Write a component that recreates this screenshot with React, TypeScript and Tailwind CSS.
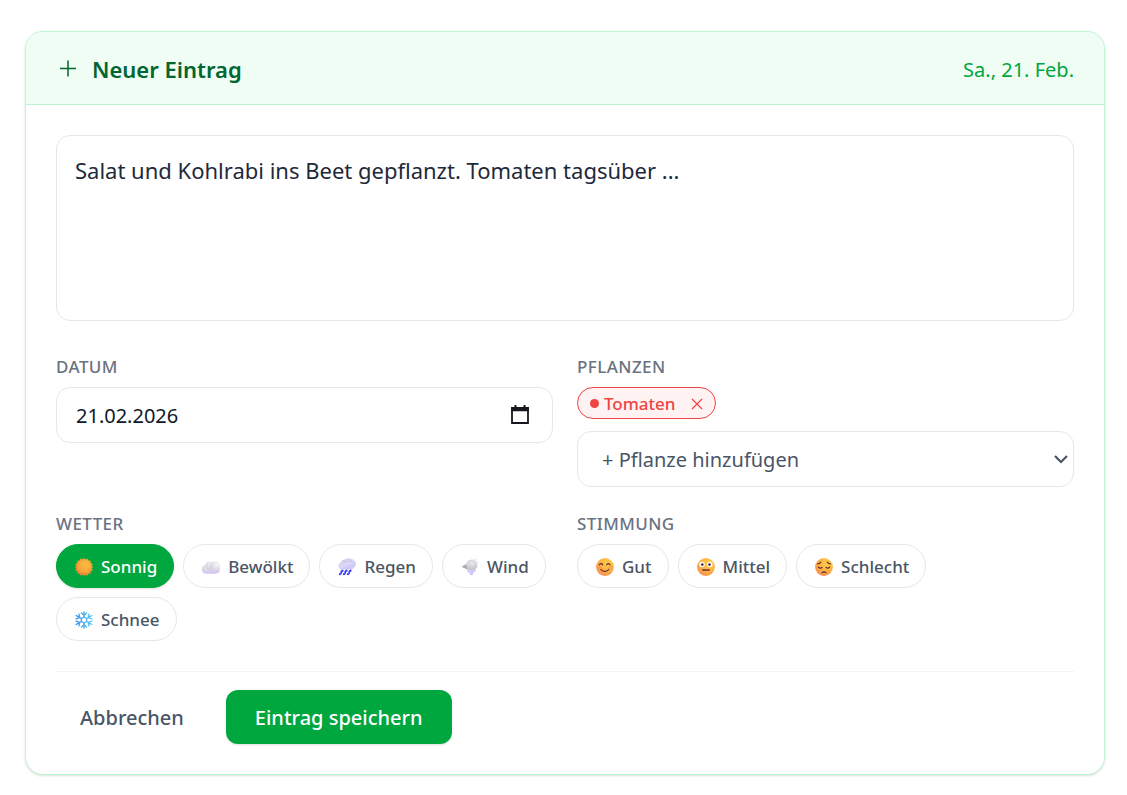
import React, { useState } from 'react';

interface Option {
  label: string;
  icon: React.ReactNode;
}

interface OptionGroupProps {
  title: string;
  options: Option[];
  selected: string;
  onSelect: (label: string) => void;
}

const SunIcon = () => (
  <svg viewBox="0 0 18 18" className="h-[18px] w-[18px]" aria-hidden="true">
    <defs>
      <radialGradient id="sun" cx="0.62" cy="0.32" r="0.75">
        <stop offset="0" stopColor="#fdb93f" />
        <stop offset="0.6" stopColor="#f39c36" />
        <stop offset="1" stopColor="#dd7c35" />
      </radialGradient>
    </defs>
    <path
      d="M9 0l1.500 1.500 1.900-.9 1 2 2.200.1.100 2.200 2 1-.9 1.900L18 9l-1.200 1.500.9 1.900-2 1-.1 2.200-2.200.1-1 2-1.900-.9L9 18l-1.500-1.200-1.900.9-1-2-2.200-.1-.1-2.200-2-1 .9-1.900L0 9l1.200-1.200-.9-1.900 2-1 .1-2.200 2.200-.1 1-2 1.900.9z"
      fill="url(#sun)"
    />
    <circle cx="9" cy="9" r="6" fill="#ffc24a" opacity=".3" />
  </svg>
);

const CloudIcon = () => (
  <svg viewBox="0 0 18 18" className="h-[18px] w-[18px]" aria-hidden="true">
    <defs>
      <linearGradient id="cloud" x1="0.6" y1="0" x2="0.4" y2="1">
        <stop offset="0" stopColor="#e9e6ec" />
        <stop offset="0.55" stopColor="#dcd5e6" />
        <stop offset="1" stopColor="#d3c3f2" />
      </linearGradient>
      <radialGradient id="cloudPuff" cx="0.65" cy="0.3" r="0.7">
        <stop offset="0" stopColor="#f7f6f8" />
        <stop offset="1" stopColor="#d3cddd" />
      </radialGradient>
    </defs>
    <rect x="0" y="8" width="18" height="7.500" rx="3.700" fill="url(#cloud)" />
    <circle cx="3.700" cy="10.500" r="3.500" fill="url(#cloudPuff)" />
    <circle cx="7.500" cy="8" r="4.200" fill="url(#cloudPuff)" />
    <circle cx="12.800" cy="8.500" r="5.100" fill="url(#cloudPuff)" />
    <path d="M1 12.500c3 2 12 2 15.500-.5-.5 2.200-2 3.500-4 3.500H4.200c-1.700 0-2.900-1.200-3.200-3z" fill="#d6c6f5" />
  </svg>
);

const RainIcon = () => (
  <svg viewBox="0 0 18 18" className="h-[18px] w-[18px]" aria-hidden="true">
    <defs>
      <linearGradient id="rain" x1="0.2" y1="0" x2="0.8" y2="1">
        <stop offset="0" stopColor="#cfcbe2" />
        <stop offset="0.5" stopColor="#dcd8f8" />
        <stop offset="1" stopColor="#c9bdf6" />
      </linearGradient>
    </defs>
    <path
      d="M4 11.500C1.800 11.500.300 10 .300 8s1.200-3.200 2.600-3.500C3.500 2.400 5.200 1.300 7 1.500 8.500-.1 11-.3 12.800.9c1.300-.1 2.500.4 3.200 1.400 1.300.7 2 1.900 1.900 3.400.1 1.600-.6 3-1.900 3.800-.8 1.300-2 2-3.500 2z"
      fill="url(#rain)"
    />
    <path d="M5 4c1.500-.8 3-.5 4 .7M11 3c1.800-.4 3.300.5 3.800 2" fill="none" stroke="#bfb9dc" strokeWidth=".8" />
    <path
      d="M4.600 12.600l-1.200 1M3 15.200l-1.200 1M8.600 12.600l-1.200 1M7 15.200l-1.200 1M12.600 12.600l-1.200 1M11 15.200l-1.200 1"
      stroke="#3f45f0"
      strokeWidth="2.100"
      strokeLinecap="round"
    />
  </svg>
);

const WindIcon = () => (
  <svg viewBox="0 0 18 18" className="h-[18px] w-[18px]" aria-hidden="true">
    <defs>
      <radialGradient id="wind" cx="0.65" cy="0.35" r="0.7">
        <stop offset="0" stopColor="#e9e8ea" />
        <stop offset="1" stopColor="#bdb9c4" />
      </radialGradient>
    </defs>
    <path
      d="M.5 8.800l4.800-3c.4-2.300 1.800-3.700 4-3.900 1.400-.9 3.100-.4 3.800.8 1.800.3 2.900 1.500 2.900 3.200 1 1.700.4 3.500-1 4.500-1 1.600-3 2.200-4.800 1.500-1.300.5-2.700.3-3.700-.4L5 10.600z"
      fill="url(#wind)"
    />
    <path d="M.5 8.800L5.200 6.500l1.200 5z" fill="#aeabb3" />
    <path d="M5.500 11.500c1.300.9 3 1.200 4.700.6 1.600.5 3.400.1 4.600-1.200l-.4 3.100-1.900.3-.6 2.700-2.900.2-.1-2.300c-1.900-.3-3.200-1.600-3.400-3.400z" fill="#cdc5fb" />
    <circle cx="14.300" cy="2" r=".9" fill="#d9d8dc" />
    <circle cx="16.300" cy="4.300" r=".8" fill="#dddce0" />
  </svg>
);

const SnowIcon = () => (
  <svg viewBox="0 0 18 18" className="h-[18px] w-[18px]" aria-hidden="true">
    <defs>
      <linearGradient id="snow" gradientUnits="userSpaceOnUse" x1="0" y1="9" x2="18" y2="9">
        <stop offset="0" stopColor="#3f8fe0" />
        <stop offset="1" stopColor="#5ad0fb" />
      </linearGradient>
    </defs>
    <g fill="none" stroke="url(#snow)" strokeWidth="1.400" strokeLinecap="round" strokeLinejoin="round">
      <path d="M9 .8V6M9 12v5.200M6.400 2L9 4.300 11.600 2M6.400 16L9 13.700l2.600 2.300" />
      <path d="M1.300 4.600l5.100 2.900M11.600 10.500l5.100 2.900M1.200 7.900l3.500-1.200L4 3.200M16.800 10.100l-3.500 1.200.7 3.500" />
      <path d="M1.300 13.400l5.100-2.900M11.600 7.500l5.100-2.900M1.200 10.100l3.500 1.200L4 14.800M16.800 7.900l-3.500-1.200.7-3.500" />
      <path d="M9 6l2.600 1.500v3L9 12l-2.600-1.500v-3z" />
    </g>
  </svg>
);

const Face = ({ id, children }: { id: string; children: React.ReactNode }) => (
  <svg viewBox="0 0 18 18" className="h-[18px] w-[18px]" aria-hidden="true">
    <defs>
      <radialGradient id={id} cx="0.65" cy="0.28" r="0.85">
        <stop offset="0" stopColor="#ffcd47" />
        <stop offset="0.55" stopColor="#fbb143" />
        <stop offset="0.85" stopColor="#f7924e" />
        <stop offset="1" stopColor="#f4706c" />
      </radialGradient>
    </defs>
    <circle cx="9" cy="9" r="8.900" fill={`url(#${id})`} />
    {children}
  </svg>
);

const HappyFace = () => (
  <Face id="happy">
    <circle cx="3.700" cy="9.500" r="2" fill="#f98a52" opacity=".5" />
    <circle cx="14.500" cy="9.500" r="2" fill="#f98a52" opacity=".5" />
    <g fill="none" stroke="#5b2a3c" strokeWidth="1.200" strokeLinecap="round">
      <path d="M3.400 6.800c.6-1.700 2.700-1.700 3.300 0M10.700 6.800c.6-1.700 2.700-1.700 3.300 0" />
      <path d="M5 11.500c1.500 2.500 6.200 2.500 7.700 0" />
    </g>
  </Face>
);

const NeutralFace = () => (
  <Face id="neutral">
    <circle cx="5" cy="6.500" r="2.700" fill="#fff" />
    <circle cx="12.800" cy="6.500" r="2.700" fill="#fff" />
    <circle cx="5.300" cy="6.600" r="1.300" fill="#4b2639" />
    <circle cx="12.500" cy="6.600" r="1.300" fill="#4b2639" />
    <path d="M5.700 12h6.600" stroke="#6d2c3b" strokeWidth="1.400" strokeLinecap="round" />
  </Face>
);

const SadFace = () => (
  <Face id="sad">
    <g fill="none" stroke="#5b2a3c" strokeWidth="1.200" strokeLinecap="round">
      <path d="M2.800 5.900c1.400-.1 2.500-.8 3-1.900M15.200 5.900c-1.400-.1-2.500-.8-3-1.900" />
      <path d="M3.300 9.200c.9 1.200 2.700 1.200 3.700.2M11 9.400c1 1 2.800 1 3.700-.2" />
      <path d="M7 14.700c1.200-.9 2.800-.9 4 0" />
    </g>
  </Face>
);

const weatherOptions: Option[] = [
  { label: 'Sonnig', icon: <SunIcon /> },
  { label: 'Bewölkt', icon: <CloudIcon /> },
  { label: 'Regen', icon: <RainIcon /> },
  { label: 'Wind', icon: <WindIcon /> },
  { label: 'Schnee', icon: <SnowIcon /> },
];

const moodOptions: Option[] = [
  { label: 'Gut', icon: <HappyFace /> },
  { label: 'Mittel', icon: <NeutralFace /> },
  { label: 'Schlecht', icon: <SadFace /> },
];

const labelClass = 'mb-2 block text-[17px] leading-6 font-medium tracking-wide text-[#6a7282] uppercase';

const OptionGroup: React.FC<OptionGroupProps> = ({ title, options, selected, onSelect }) => (
  <div role="group" aria-label={title}>
    <span className={labelClass}>{title}</span>
    <div className="flex flex-wrap gap-[9px]">
      {options.map((option) => (
        <button
          key={option.label}
          type="button"
          aria-pressed={selected === option.label}
          onClick={() => onSelect(option.label)}
          className={`flex h-11 items-center gap-2 rounded-full border pt-px pr-4 pl-[18px] text-[17px] font-medium ${
            selected === option.label
              ? 'border-[#00a63e] bg-[#00a63e] text-white shadow-sm'
              : 'border-gray-200 bg-white text-[#4a5565]'
          }`}
        >
          {option.icon}
          {option.label}
        </button>
      ))}
    </div>
  </div>
);

const App: React.FC = () => {
  const [text, setText] = useState('Salat und Kohlrabi ins Beet gepflanzt. Tomaten tagsüber ...');
  const [date, setDate] = useState('21.02.2026');
  const [plants, setPlants] = useState<string[]>(['Tomaten']);
  const [weather, setWeather] = useState('Sonnig');
  const [mood, setMood] = useState('');

  const addPlant = (e: React.ChangeEvent<HTMLSelectElement>) => {
    const plant = e.target.value;
    if (plant && !plants.includes(plant)) {
      setPlants([...plants, plant]);
    }
  };

  return (
    <main className="bg-white pt-[31px] pr-[22px] pb-5 pl-[25px] font-['Noto_Sans','Open_Sans',sans-serif]">
      <form
        onSubmit={(e) => e.preventDefault()}
        className="overflow-hidden rounded-[18px] border border-[#b9f8cf] bg-white shadow-sm"
      >
        <header className="flex h-[73px] items-center justify-between border-b border-[#b9f8cf] bg-[#f0fdf4] px-[30px] pt-[3px]">
          <h1 className="flex items-center gap-3 text-[22px] font-semibold text-[#016630]">
            <svg viewBox="0 0 24 24" className="h-6 w-6" aria-hidden="true">
              <path d="M4 10.500h16M12 2.500v16" stroke="currentColor" strokeWidth="1.500" fill="none" />
            </svg>
            Neuer Eintrag
          </h1>
          <span className="text-[20px] text-[#00a63e]">Sa., 21. Feb.</span>
        </header>

        <div className="p-[30px]">
          <textarea
            aria-label="Eintrag"
            value={text}
            onChange={(e) => setText(e.target.value)}
            className="block h-[186px] w-full resize-none rounded-[14px] border border-gray-200 px-[18px] py-4 text-[22px] leading-9 text-[#1e2939]"
          />

          <div className="mt-[34px] grid grid-cols-2 gap-x-6 gap-y-[25px]">
            <div>
              <label htmlFor="date" className={labelClass}>
                Datum
              </label>
              <div className="flex h-14 items-center rounded-[14px] border border-gray-200 pr-[22px] pl-[19px]">
                <input
                  type="text"
                  id="date"
                  name="date"
                  inputMode="numeric"
                  value={date}
                  onChange={(e) => setDate(e.target.value)}
                  className="w-full min-w-0 flex-1 pt-[2px] text-[20px] text-[#101828]"
                />
                <button type="button" aria-label="Kalender öffnen" className="text-[#16181d]">
                  <svg viewBox="0 0 20 22" className="h-[22px] w-5" aria-hidden="true">
                    <path d="M2 4h16v15H2z" fill="none" stroke="currentColor" strokeWidth="1.800" />
                    <path d="M1.100 3.200h17.800v4H1.100zM4.500 1h2v3h-2zM13.500 1h2v3h-2z" fill="currentColor" />
                  </svg>
                </button>
              </div>
            </div>

            <div>
              <label htmlFor="plant" className={labelClass}>
                Pflanzen
              </label>
              <div className="mb-3 flex flex-wrap gap-2">
                {plants.map((plant) => (
                  <span
                    key={plant}
                    className="flex h-8 items-center rounded-full border border-[#ef4444] bg-[#fef2f2] px-3 pt-px text-[17px] font-medium text-[#ef4444]"
                  >
                    <span className="mr-[5px] h-[9px] w-[9px] rounded-full bg-[#ef4444]" />
                    {plant}
                    <button
                      type="button"
                      aria-label={`${plant} entfernen`}
                      onClick={() => setPlants(plants.filter((p) => p !== plant))}
                      className="ml-[15px]"
                    >
                      <svg viewBox="0 0 12 12" className="h-3 w-3" aria-hidden="true">
                        <path d="M1 1l10 10M11 1L1 11" stroke="currentColor" strokeWidth="1.200" />
                      </svg>
                    </button>
                  </span>
                ))}
              </div>
              <div className="grid items-center">
                <select
                  id="plant"
                  value=""
                  onChange={addPlant}
                  className="col-start-1 row-start-1 h-14 w-full appearance-none rounded-[14px] border border-gray-200 bg-white px-6 pt-[2px] text-[20px] text-[#4a5565]"
                >
                  <option value="">+ Pflanze hinzufügen</option>
                  <option value="Salat">Salat</option>
                  <option value="Kohlrabi">Kohlrabi</option>
                </select>
                <svg
                  viewBox="0 0 16 16"
                  className="pointer-events-none col-start-1 row-start-1 mr-[5px] h-4 w-4 justify-self-end"
                  aria-hidden="true"
                >
                  <path d="M2 5l6 6 6-6" fill="none" stroke="#4a5565" strokeWidth="2.200" />
                </svg>
              </div>
            </div>

            <OptionGroup title="Wetter" options={weatherOptions} selected={weather} onSelect={setWeather} />
            <OptionGroup title="Stimmung" options={moodOptions} selected={mood} onSelect={setMood} />
          </div>

          <footer className="mt-[30px] flex items-center gap-[18px] border-t border-gray-100 pt-[18px]">
            <button type="button" className="h-[54px] px-6 pt-[2px] text-[20px] font-medium text-[#4a5565]">
              Abbrechen
            </button>
            <button
              type="submit"
              className="h-[54px] rounded-[12px] bg-[#00a63e] px-[29px] pt-[2px] text-[20px] font-medium text-white shadow-sm"
            >
              Eintrag speichern
            </button>
          </footer>
        </div>
      </form>
    </main>
  );
};

export default App;
